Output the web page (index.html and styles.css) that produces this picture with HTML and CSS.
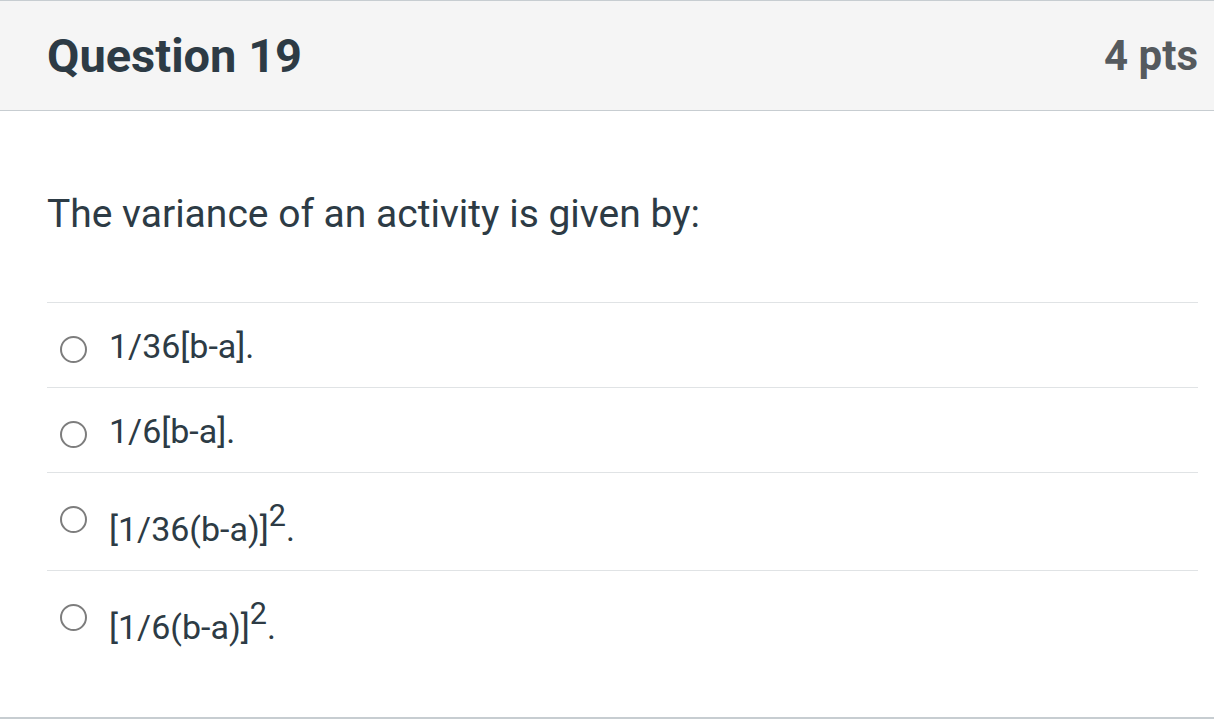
FILE: index.html
```html
<!DOCTYPE html>
<html lang="en">
<head>
<meta charset="utf-8">
<title>Question 19</title>
<link rel="stylesheet" href="styles.css">
</head>
<body>
<div class="question">
  <div class="header">
    <h2 class="title">Question 19</h2>
    <span class="points">4 pts</span>
  </div>
  <div class="content">
    <p class="prompt">The variance of an activity is given by:</p>
    <div class="answers">
      <label class="answer"><span class="radio"></span><span class="text">1/36[b-a].</span></label>
      <label class="answer"><span class="radio"></span><span class="text">1/6[b-a].</span></label>
      <label class="answer"><span class="radio"></span><span class="text">[1/36(b-a)]<sup>2</sup>.</span></label>
      <label class="answer"><span class="radio"></span><span class="text">[1/6(b-a)]<sup>2</sup>.</span></label>
    </div>
  </div>
</div>
</body>
</html>
```
FILE: styles.css
```css
html, body {
  margin: 0;
  padding: 0;
  background: #ffffff;
}
body {
  font-family: Roboto, "Liberation Sans", Arial, sans-serif;
  color: #2d3b45;
}
.question {
  width: 1214px;
  height: 719px;
  border-bottom: 2px solid #c7cdd1;
  box-sizing: border-box;
}
.header {
  display: flex;
  align-items: center;
  justify-content: space-between;
  height: 111px;
  box-sizing: border-box;
  background: #f5f5f5;
  border-top: 1px solid #c7cdd1;
  border-bottom: 1px solid #c7cdd1;
  padding: 0 16px 0 47px;
}
.title {
  margin: 0;
  font-size: 47px;
  font-weight: 700;
  color: #2d3b45;
}
.points {
  font-size: 42px;
  font-weight: 700;
  color: #555a5e;
}
.content {
  padding: 0 16px 0 47px;
}
.prompt {
  margin: 0;
  padding: 80px 0 65px;
  font-size: 39px;
  line-height: 46px;
  color: #2d3b45;
}
.answers {
  display: flex;
  flex-direction: column;
}
.answer {
  display: flex;
  align-items: flex-start;
  border-top: 1px solid #e0e3e5;
  padding: 23px 0 21px 13px;
  font-size: 34px;
  line-height: 40px;
  color: #2d3b45;
}
.radio {
  flex: none;
  width: 23px;
  height: 23px;
  border: 2px solid #7d7d7d;
  border-radius: 50%;
  margin-top: 10px;
  margin-right: 22px;
  background: #fff;
}
.text sup {
  font-size: 0.9em;
  vertical-align: 15px;
}
```
